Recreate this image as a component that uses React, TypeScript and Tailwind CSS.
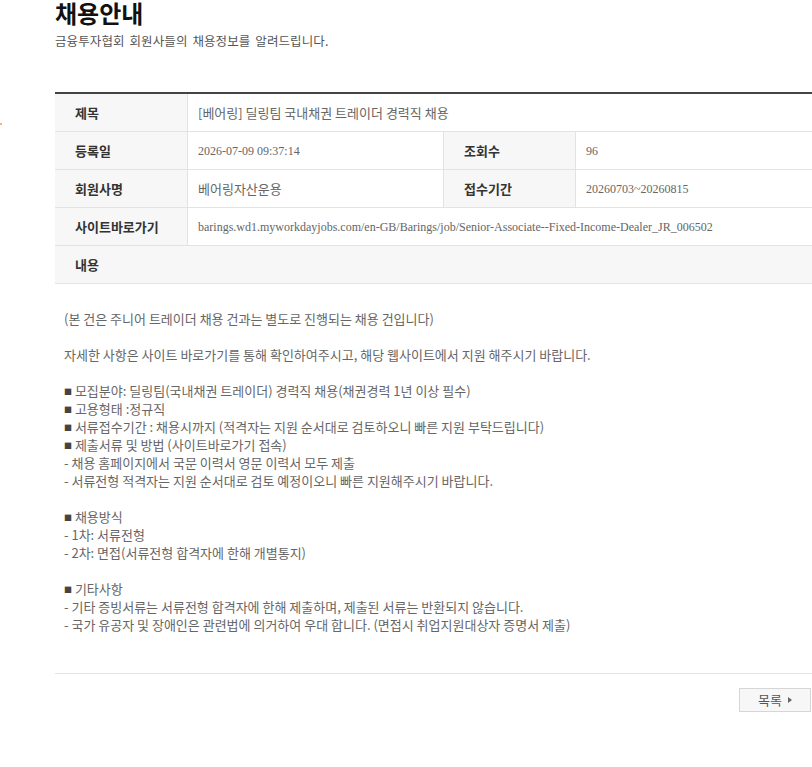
import React from 'react'

const sans = "font-['Noto_Sans_CJK_KR',sans-serif]"

function Label({ children, className = '' }: { children: React.ReactNode; className?: string }) {
  return (
    <div className={`flex items-center pl-[20px] bg-[#f7f7f7] text-[13px] font-bold text-[#333] border-b border-[#e3e3e3] ${className}`}>
      {children}
    </div>
  )
}

function Value({ children, serif = false, className = '' }: { children: React.ReactNode; serif?: boolean; className?: string }) {
  const font = serif ? "font-['Liberation_Serif','Noto_Sans_CJK_KR',serif] text-[12px]" : 'text-[13px]'
  return (
    <div className={`flex items-center pl-[10px] text-[#666] border-b border-[#e3e3e3] whitespace-nowrap overflow-hidden ${font} ${className}`}>
      {children}
    </div>
  )
}

const body: string[] = [
  '(본 건은 주니어 트레이더 채용 건과는 별도로 진행되는 채용 건입니다)',
  '',
  '자세한 사항은 사이트 바로가기를 통해 확인하여주시고, 해당 웹사이트에서 지원 해주시기 바랍니다.',
  '',
  '■ 모집분야: 딜링팀(국내채권 트레이더) 경력직 채용(채권경력 1년 이상 필수)',
  '■ 고용형태 :정규직',
  '■ 서류접수기간 : 채용시까지 (적격자는 지원 순서대로 검토하오니 빠른 지원 부탁드립니다)',
  '■ 제출서류 및 방법 (사이트바로가기 접속)',
  '- 채용 홈페이지에서 국문 이력서 영문 이력서 모두 제출',
  '- 서류전형 적격자는 지원 순서대로 검토 예정이오니 빠른 지원해주시기 바랍니다.',
  '',
  '■ 채용방식',
  '- 1차: 서류전형',
  '- 2차: 면접(서류전형 합격자에 한해 개별통지)',
  '',
  '■ 기타사항',
  '- 기타 증빙서류는 서류전형 합격자에 한해 제출하며, 제출된 서류는 반환되지 않습니다.',
  '- 국가 유공자 및 장애인은 관련법에 의거하여 우대 합니다. (면접시 취업지원대상자 증명서 제출)',
]

export default function App() {
  return (
    <div className={`relative min-h-[767px] bg-white ${sans}`}>
      {/* stray marker on the left edge */}
      <span className="absolute left-0 top-[123px] w-[2px] h-[2px] rounded-full bg-[#f59a6a]" />

      <div className="ml-[55px] w-[757px]">
        <h1 className="text-[24px] font-bold text-[#111] leading-[25px]">채용안내</h1>
        <p className="mt-[8px] text-[12.5px] text-[#555] leading-[16px] tracking-[0.1px] [word-spacing:2px]">
          금융투자협회 회원사들의 채용정보를 알려드립니다.
        </p>

        <div className="mt-[43px] border-t-2 border-[#444] grid grid-cols-[133px_256px_132px_1fr]">
          <Label className="h-[38px] border-r">제목</Label>
          <Value className="h-[38px] col-span-3">[베어링] 딜링팀 국내채권 트레이더 경력직 채용</Value>

          <Label className="h-[38px] border-r">등록일</Label>
          <Value serif className="h-[38px] border-r">2026-07-09 09:37:14</Value>
          <Label className="h-[38px] border-r">조회수</Label>
          <Value serif className="h-[38px]">96</Value>

          <Label className="h-[38px] border-r">회원사명</Label>
          <Value className="h-[38px] border-r">베어링자산운용</Value>
          <Label className="h-[38px] border-r">접수기간</Label>
          <Value serif className="h-[38px]">20260703~20260815</Value>

          <Label className="h-[38px] border-r">사이트바로가기</Label>
          <Value serif className="h-[38px] col-span-3">
            barings.wd1.myworkdayjobs.com/en-GB/Barings/job/Senior-Associate--Fixed-Income-Dealer_JR_006502
          </Value>

          <Label className="h-[38px] col-span-4">내용</Label>
        </div>

        <div className="pl-[9px] pt-[26px] pb-[39px] border-b border-[#e3e3e3] text-[13px] leading-[18px] text-[#666]">
          {body.map((line, i) => (
            <div key={i} className="h-[18px] whitespace-nowrap">
              {line.startsWith('■') ? (
                <>
                  <span className="text-[8px] text-[#444] align-[1px]">■</span>
                  {line.slice(1)}
                </>
              ) : (
                line
              )}
            </div>
          ))}
        </div>

        <div className="flex justify-end mt-[14px]">
          <button className="w-[72px] h-[24px] mr-[1px] flex items-center justify-center gap-[6px] bg-[#f7f7f7] border border-[#d6d6d6] text-[13px] text-[#555]">
            목록
            <span className="w-0 h-0 border-y-[3px] border-y-transparent border-l-[4px] border-l-[#666]" />
          </button>
        </div>
      </div>
    </div>
  )
}
